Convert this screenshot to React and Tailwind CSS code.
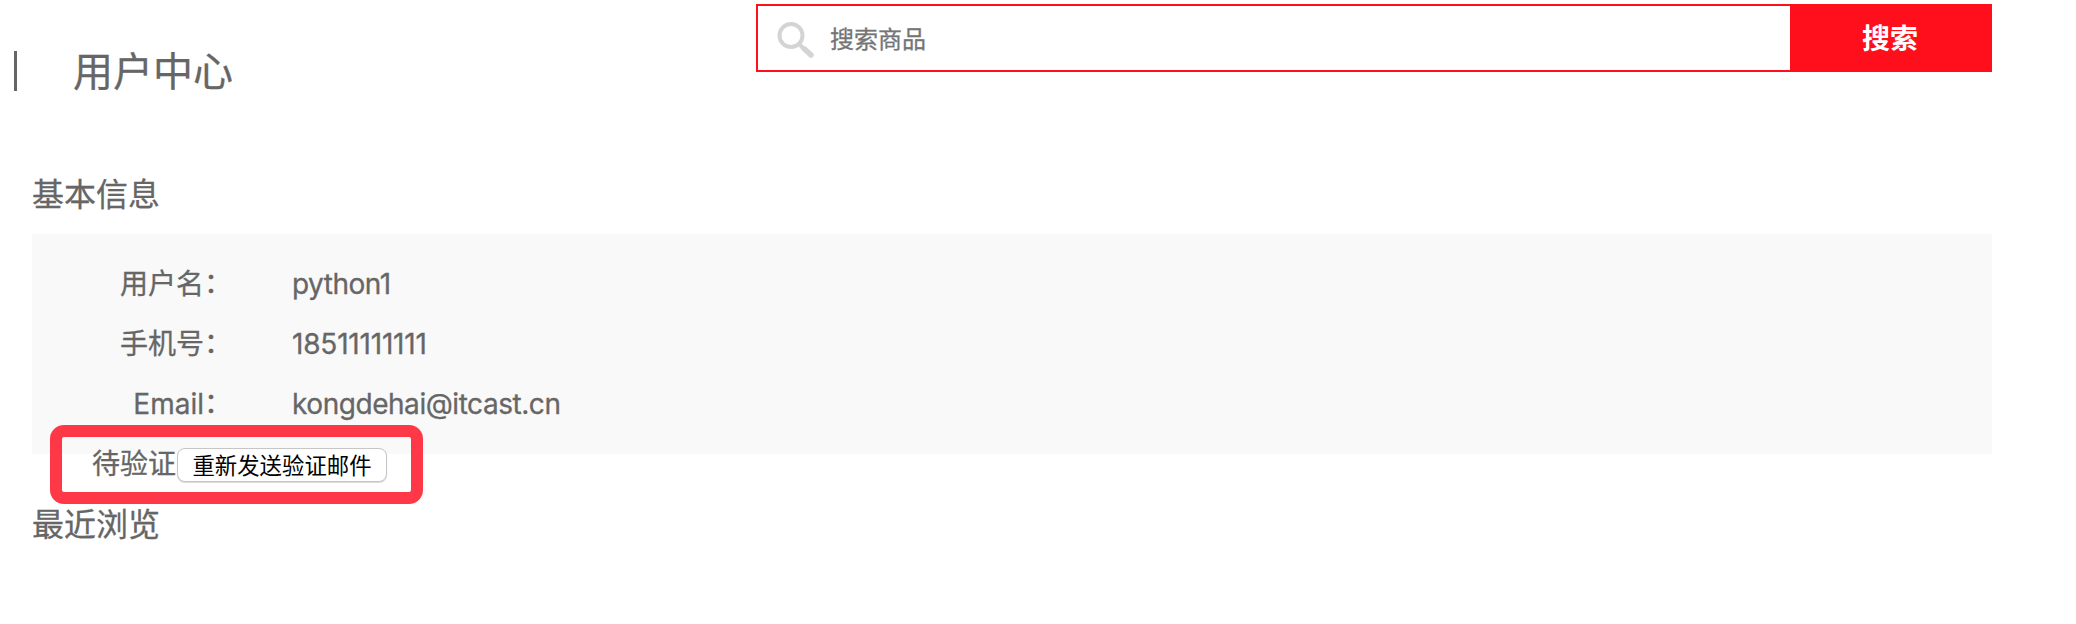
const rows = [
  { label: '用户名', value: 'python1', tracking: 'tracking-[-0.5px]' },
  { label: '手机号', value: '18511111111', tracking: 'tracking-[-0.2px]' },
  { label: 'Email', value: 'kongdehai@itcast.cn', tracking: 'tracking-[-0.45px]' },
];

function SearchIcon() {
  return (
    <svg className="ml-[18px] h-[40px] w-[40px] shrink-0" viewBox="0 0 40 40" fill="none">
      <circle cx="15" cy="17.5" r="11.5" stroke="#d4d4d4" strokeWidth="4" />
      <path d="M24 27L28 31" stroke="#d4d4d4" strokeWidth="4" />
      <path d="M28.5 31L35 37" stroke="#d4d4d4" strokeWidth="5.5" strokeLinecap="round" />
    </svg>
  );
}

export default function App() {
  return (
    <div className="h-[624px] w-[2076px] overflow-hidden bg-white font-['Inter','Noto_Sans_CJK_SC',sans-serif] text-[#666] [-webkit-text-stroke:0.3px]">
      <header className="flex h-[144px] items-start pr-[84px]">
        <div className="ml-[14px] mt-[51px] h-[40px] w-[3px] bg-[#666]" />
        <h1 className="ml-[56px] mt-[42px] text-[40px] leading-[60px]">用户中心</h1>
        <form className="ml-auto mt-[4px] flex h-[68px] w-[1236px] border-2 border-[#ff0e1b]">
          <div className="flex flex-1 items-center">
            <SearchIcon />
            <input
              className="ml-[14px] h-[60px] flex-1 bg-transparent pt-[2px] text-[24px] outline-none placeholder:text-[#757575]"
              placeholder="搜索商品"
            />
          </div>
          <button type="button" className="w-[200px] bg-[#ff0e1b] pt-[2px] text-[28px] font-bold text-white [-webkit-text-stroke:0px]">
            搜索
          </button>
        </form>
      </header>

      <main className="relative pl-[32px] pr-[84px]">
        <h2 className="pt-[27px] text-[32px] leading-[48px]">基本信息</h2>
        <section className="mt-[15px] h-[220px] bg-[#f9f9f9] pt-[20px] text-[28px] leading-[60px]">
          {rows.map((row) => (
            <div key={row.label} className="flex h-[60px]">
              <span className="w-[200px] text-right">
                {row.label}
                <span className="inline-block -translate-y-[1px]">：</span>
              </span>
              <span className={'ml-[60px] ' + row.tracking}>{row.value}</span>
            </div>
          ))}
          <div className="flex h-[60px] items-center pl-[60px]">
            <span>待验证</span>
            <button
              type="button"
              className="ml-[1px] mt-[2px] h-[34px] w-[210px] whitespace-nowrap rounded-[8px] border border-[#c6c6c6] bg-white pt-[1px] text-center text-[22.4px] leading-[32px] text-black shadow-[0_1px_1px_rgba(0,0,0,0.15)] [-webkit-text-stroke:0px]"
            >
              重新发送验证邮件
            </button>
          </div>
        </section>
        <h2 className="mt-[47px] text-[32px] leading-[48px]">最近浏览</h2>
        <div className="pointer-events-none absolute left-[50px] top-[281px] h-[79px] w-[373px] rounded-[14px] border-[12px] border-[#ff3848]" />
      </main>
    </div>
  );
}
